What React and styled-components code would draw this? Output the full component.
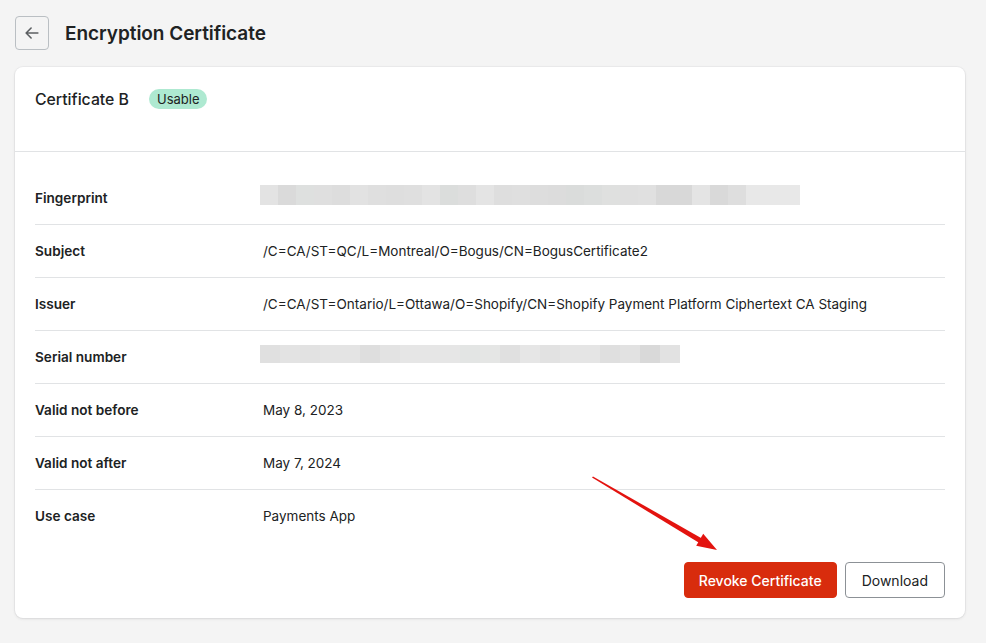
import React from "react";
import styled, { createGlobalStyle } from "styled-components";

const GlobalStyle = createGlobalStyle`
  body {
    margin: 0;
    background: #f4f4f4;
    font-family: Inter, "Noto Sans", "Liberation Sans", sans-serif;
    color: #202223;
    -webkit-font-smoothing: antialiased;
  }
`;

const fingerprintShades = [
  "#e3e3e3", "#dadada", "#dee0df", "#dfdfdf", "#dddddd", "#e2e2e2", "#dfdfdf", "#dedede",
  "#dfdfdf", "#e3e3e3", "#dbdddc", "#dedede", "#e4e4e4", "#dedede", "#dfdfdf", "#dddddd",
  "#dcdcdc", "#dadcdb", "#dcdedd", "#dfe0df", "#dfdfdf", "#e0e0e0", "#d8d8d8", "#d8d8d8",
  "#e4e4e4", "#d9d9d9", "#dedede", "#e8e8e8", "#e8e8e8", "#e8e8e8",
];

const serialShades = [
  "#e0e0e0", "#e3e3e3", "#e2e2e2", "#e4e4e4", "#e4e4e4", "#dedede", "#e3e3e3", "#e6e6e6",
  "#e6e6e6", "#e6e6e6", "#e3e5e4", "#e5e6e5", "#e0e0e0", "#e6e6e6", "#e2e2e2", "#e5e5e5",
  "#e5e5e5", "#dfdfdf", "#e2e2e2", "#d9d9d9", "#e2e2e2",
];

const rows = [
  { label: "Fingerprint", blur: fingerprintShades, blockWidth: 18 },
  { label: "Subject", value: "/C=CA/ST=QC/L=Montreal/O=Bogus/CN=BogusCertificate2" },
  {
    label: "Issuer",
    value: "/C=CA/ST=Ontario/L=Ottawa/O=Shopify/CN=Shopify Payment Platform Ciphertext CA Staging",
  },
  { label: "Serial number", blur: serialShades, blockWidth: 20 },
  { label: "Valid not before", value: "May 8, 2023" },
  { label: "Valid not after", value: "May 7, 2024" },
  { label: "Use case", value: "Payments App" },
];

const Page = styled.div`
  padding: 16px 21px 24px 15px;
`;

const TopBar = styled.div`
  display: flex;
  align-items: center;
  gap: 16px;
  height: 34px;
  margin-bottom: 17px;
`;

const BackButton = styled.button`
  width: 34px;
  height: 34px;
  display: flex;
  align-items: center;
  justify-content: center;
  background: transparent;
  border: 1px solid #babfc3;
  border-radius: 4px;
  padding: 0;
  color: #5c5f62;
`;

const PageTitle = styled.h1`
  margin: 0;
  font-size: 19px;
  font-weight: 600;
  letter-spacing: -0.05px;
  color: #202223;
`;

const Card = styled.div`
  position: relative;
  background: #fff;
  border-radius: 8px;
  box-shadow: 0 0 0 1px rgba(63, 63, 68, 0.04), 0 1px 3px rgba(63, 63, 68, 0.12);
`;

const CardHeader = styled.div`
  display: flex;
  align-items: center;
  gap: 20px;
  height: 84px;
  padding: 0 20px;
  border-bottom: 1px solid #e1e3e5;
`;

const CardTitle = styled.h2`
  margin: 0;
  font-size: 15.8px;
  font-weight: 500;
  transform: translateY(-10px);
`;

const Badge = styled.span`
  background: #aee9d1;
  color: #202223;
  font-size: 13px;
  border-radius: 10px;
  padding: 2px 8px;
  line-height: 16px;
  transform: translateY(-10px);
`;

const DetailList = styled.div`
  padding: 20px 20px 0;
`;

const Row = styled.div`
  display: grid;
  grid-template-columns: 225px 1fr;
  align-items: center;
  height: 53px;
  border-bottom: 1px solid ${(p) => (p.$last ? "transparent" : "#e1e3e5")};
  box-sizing: border-box;
`;

const Label = styled.div`
  font-size: 13.6px;
  font-weight: 600;
  color: #202223;
`;

const Value = styled.div`
  font-size: 13.5px;
  color: #202223;
  padding-left: 3px;
`;

const Blurred = styled.div`
  display: flex;
  height: ${(p) => p.$h}px;
  margin-top: -6px;
`;

const Block = styled.span`
  display: block;
  height: 100%;
`;

const Actions = styled.div`
  display: flex;
  justify-content: flex-end;
  gap: 8px;
  padding: 19px 20px 20px;
`;

const Button = styled.button`
  height: 36px;
  padding: 0 ${(p) => (p.$danger ? 14 : 16)}px;
  font-family: inherit;
  font-size: 14px;
  border-radius: 4px;
  cursor: pointer;
  border: 1px solid ${(p) => (p.$danger ? "#d82c0d" : "#8c9196")};
  background: ${(p) => (p.$danger ? "#d82c0d" : "#fff")};
  color: ${(p) => (p.$danger ? "#fff" : "#202223")};
  font-weight: ${(p) => (p.$danger ? 500 : 400)};
`;

const Arrow = styled.svg`
  position: absolute;
  left: 575px;
  top: 408px;
  pointer-events: none;
`;

function BlurBar({ shades, width }) {
  return (
    <Blurred $h={width === 18 ? 20 : 18}>
      {shades.map((c, i) => (
        <Block key={i} style={{ width, background: c }} />
      ))}
    </Blurred>
  );
}

export default function App() {
  return (
    <>
      <GlobalStyle />
      <Page>
        <TopBar>
          <BackButton aria-label="Back">
            <svg width="18" height="18" viewBox="0 0 20 20" fill="none">
              <path
                d="M16.5 10H4M9 4.5L3.5 10L9 15.5"
                stroke="#5c5f62"
                strokeWidth="1.8"
                strokeLinecap="round"
                strokeLinejoin="round"
              />
            </svg>
          </BackButton>
          <PageTitle>Encryption Certificate</PageTitle>
        </TopBar>
        <Card>
          <CardHeader>
            <CardTitle>Certificate B</CardTitle>
            <Badge>Usable</Badge>
          </CardHeader>
          <DetailList>
            {rows.map((r, i) => (
              <Row key={r.label} $last={i === rows.length - 1}>
                <Label>{r.label}</Label>
                {r.blur ? (
                  <BlurBar shades={r.blur} width={r.blockWidth} />
                ) : (
                  <Value>{r.value}</Value>
                )}
              </Row>
            ))}
          </DetailList>
          <Actions>
            <Button $danger>Revoke Certificate</Button>
            <Button>Download</Button>
          </Actions>
          <Arrow width="160" height="90" viewBox="0 0 160 90">
            <polygon points="2,2.6 3,1.4 111.5,63.3 109,67.7" fill="#e3130f" />
            <polygon points="127,75 106.2,70.8 113.2,58.8" fill="#e3130f" />
          </Arrow>
        </Card>
      </Page>
    </>
  );
}
